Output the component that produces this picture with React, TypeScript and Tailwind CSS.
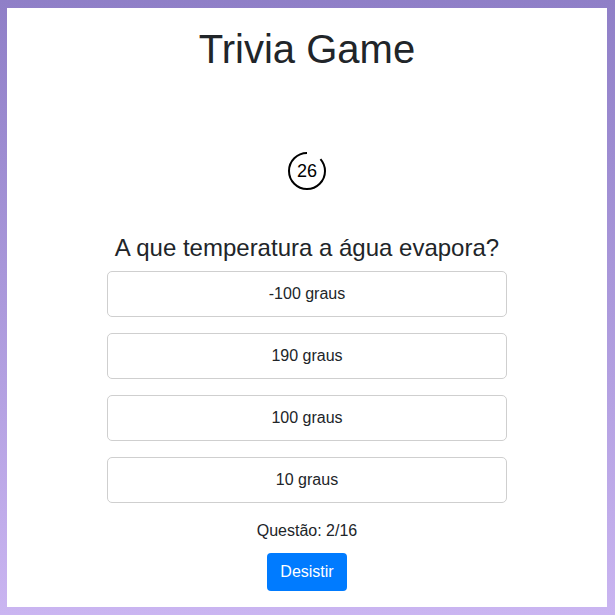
import { useState } from "react";

const answers = ["-100 graus", "190 graus", "100 graus", "10 graus"];

function Timer({ seconds, total }: { seconds: number; total: number }) {
  const radius = 18;
  const circumference = 2 * Math.PI * radius;
  const drawn = (seconds / total) * circumference;
  return (
    <div className="relative flex h-[40px] w-[40px] items-center justify-center">
      <svg className="absolute inset-0" width="40" height="40" viewBox="0 0 40 40" aria-hidden="true">
        <circle
          cx="20"
          cy="20"
          r={radius}
          fill="none"
          stroke="#000"
          strokeWidth="2"
          strokeDasharray={`${drawn} ${circumference}`}
          strokeDashoffset={-(circumference - drawn)}
          transform="rotate(-90 20 20)"
        />
      </svg>
      <span className="relative text-[18px] leading-none text-black">{seconds}</span>
    </div>
  );
}

export default function App() {
  const [picked, setPicked] = useState<string | null>(null);

  return (
    <div className="flex h-[615px] w-full bg-gradient-to-b from-[#8f7fc7] to-[#cab5f1] pb-[8px] pl-[7px] pr-[8px] pt-[8px] font-['Liberation_Sans',Arial,sans-serif] text-[#212529]">
      <main className="flex flex-1 flex-col items-center overflow-hidden bg-white pt-[17px]">
        <h1 className="text-[40px] leading-[48px]">Trivia Game</h1>
        <div className="mt-[78px]">
          <Timer seconds={26} total={30} />
        </div>
        <h4 className="mt-[42px] text-[24px] leading-[29px]">A que temperatura a água evapora?</h4>
        <div className="mt-[9px] flex w-[400px] flex-col gap-[16px]">
          {answers.map((answer) => (
            <button
              key={answer}
              type="button"
              onClick={() => setPicked(answer)}
              className={`h-[46px] w-full rounded-[5px] border border-[#cfcfcf] bg-white text-[16px] leading-[24px] text-[#212529] ${picked === answer ? "bg-gray-50" : ""}`}
            >
              {answer}
            </button>
          ))}
        </div>
        <p className="mt-[16px] text-[16px] leading-[24px]">Questão: 2/16</p>
        <button
          type="button"
          className="mt-[10px] h-[38px] w-[80px] rounded-[4px] bg-[#007bff] text-[16px] leading-[24px] text-white"
        >
          Desistir
        </button>
      </main>
    </div>
  );
}
